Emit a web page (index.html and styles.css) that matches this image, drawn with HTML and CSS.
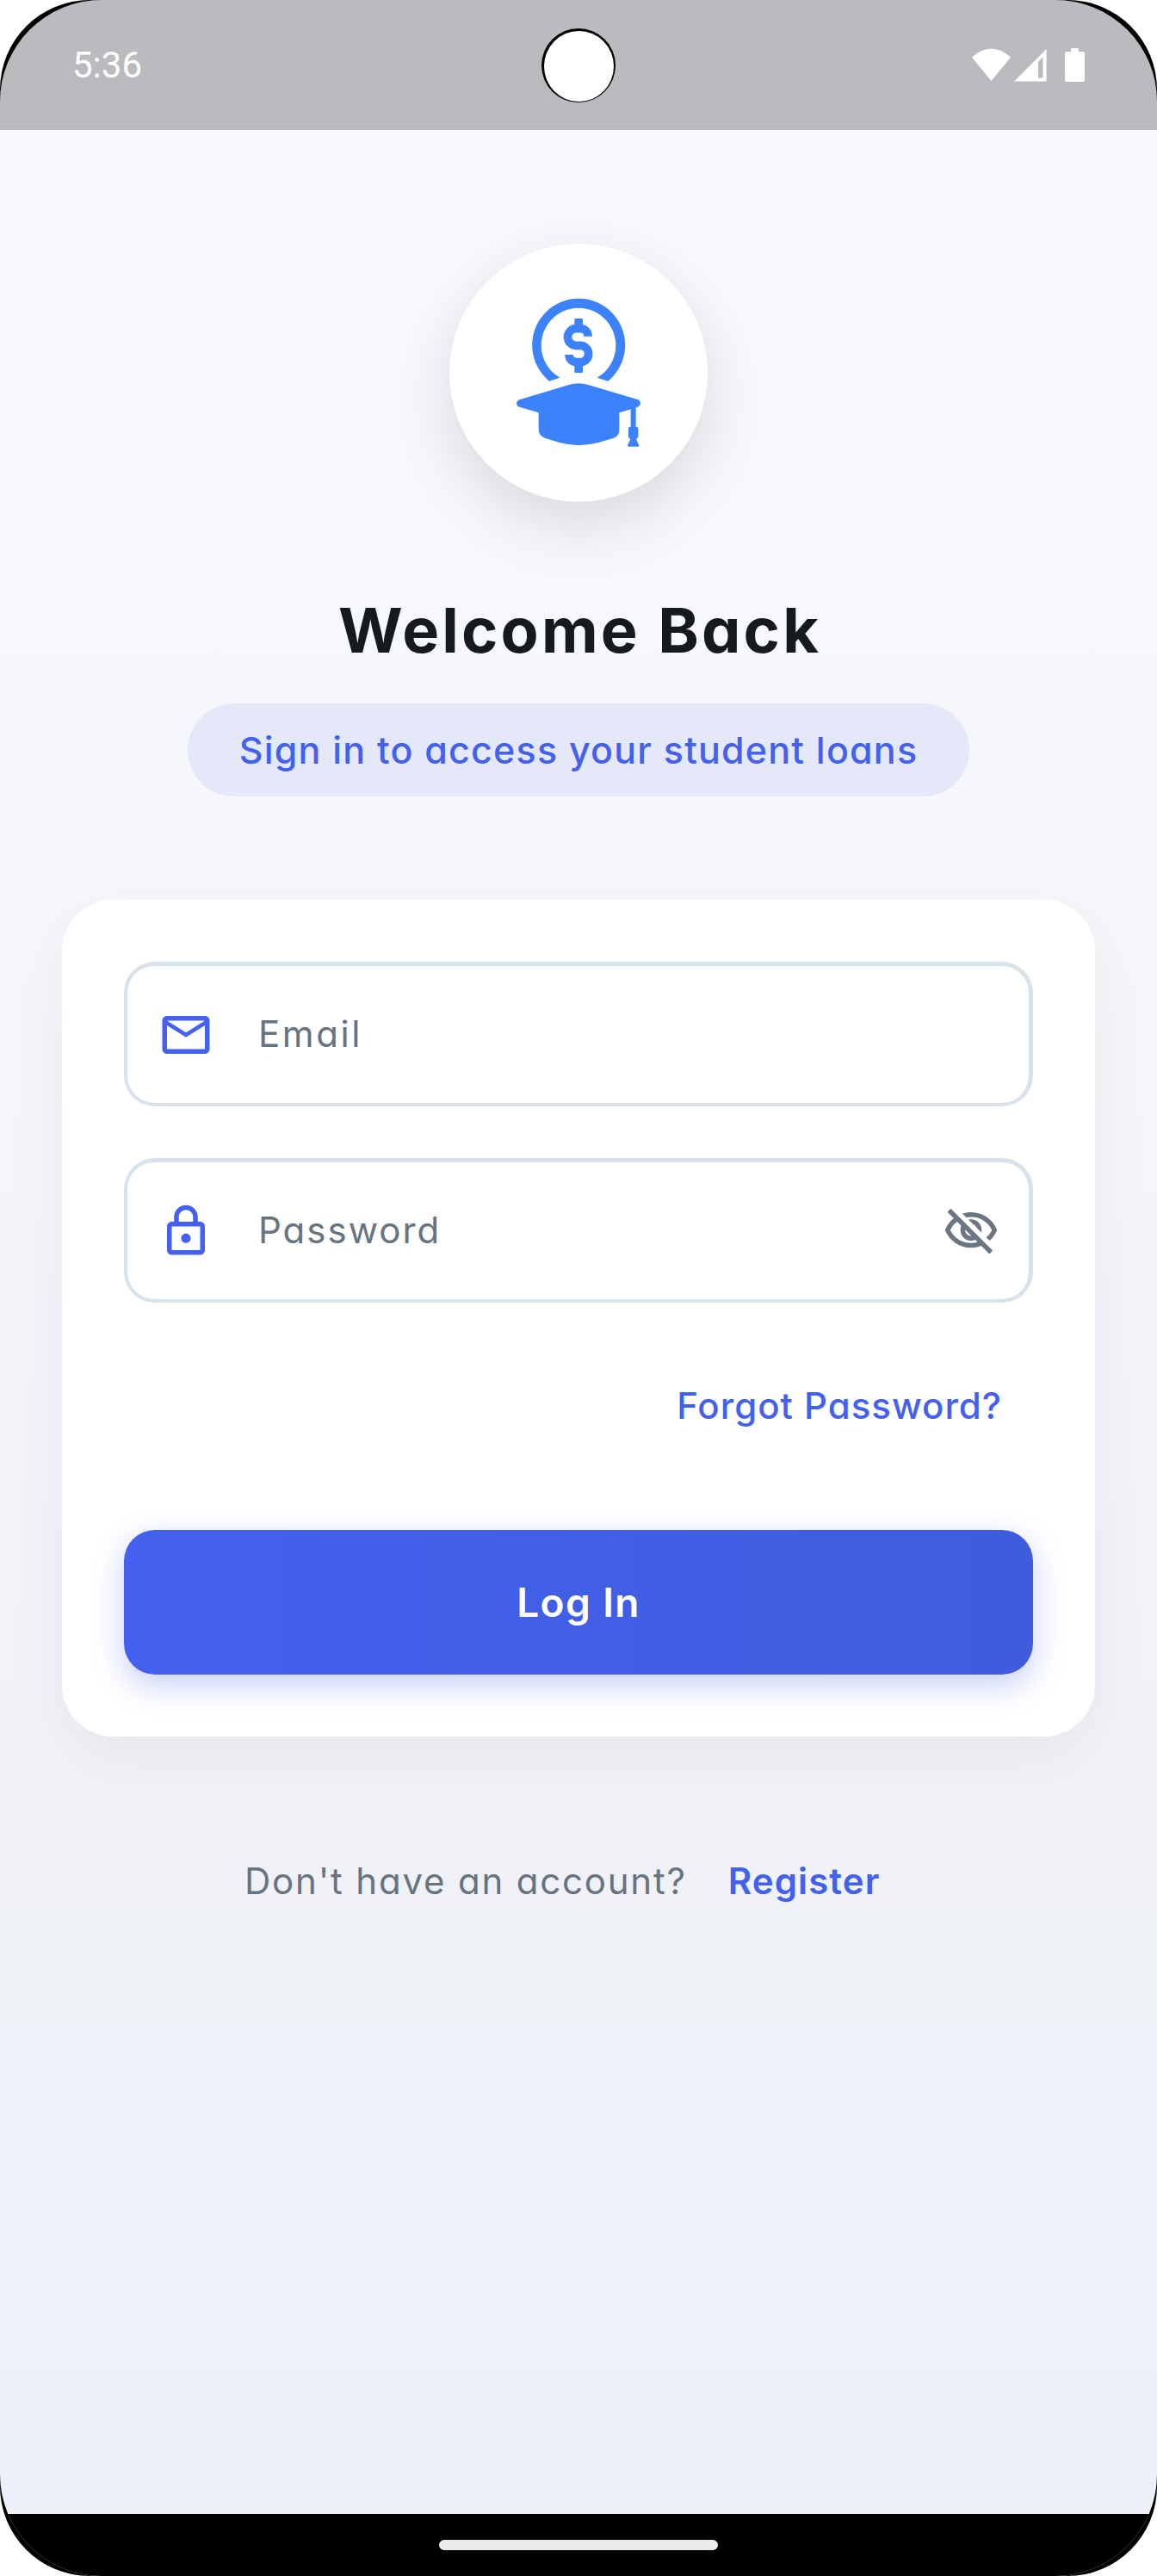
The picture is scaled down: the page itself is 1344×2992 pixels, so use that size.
FILE: index.html
```html
<!DOCTYPE html>
<html lang="en">
<head>
<meta charset="utf-8">
<title>Sign in</title>
<link rel="stylesheet" href="styles.css">
</head>
<body>
<div class="device">
  <div class="screen">
    <header class="status-bar">
      <span class="clock">5:36</span>
      <span class="camera"><span class="lens"></span></span>
      <svg class="status-icons" viewBox="1129 55 131 40" fill="#fff">
        <path d="M1129 65.5Q1151.500 45.500 1174 65.500L1151.500 93Z"/>
        <path fill-rule="evenodd" d="M1178 93.500L1215.600 56V93.500ZM1206 71V89.500H1211.500V65Z"/>
        <path d="M1244 55H1253V59H1258Q1260 59 1260 61V92Q1260 94 1258 94H1239Q1237 94 1237 92V61Q1237 59 1239 59H1244Z"/>
      </svg>
    </header>
    <main class="content">
      <div class="logo">
        <svg viewBox="66 39 900 900" fill="#3b82fc">
          <path d="M414 518A162 162 0 1 1 619 518L581 506A130 130 0 1 0 451 506Z"/>
          <path d="M310 583L482 531Q516 520 550 531L722 582C735 587 735 602 722 608L716 610V678H721Q724 680 724 684V710Q724 716 717 720L727 742Q727 746 723 746H690Q686 746 687 741L697 720Q690 717 690 710V684Q690 679 694 678H698V616L658 628V690Q657 710 637 717L583 733Q516 750 453 733L400 717Q377 708 377 688V628L310 608C297 603 297 588 310 583Z"/>
          <rect x="502" y="300" width="29" height="32" rx="4"/>
          <rect x="502" y="456" width="29" height="33" rx="4"/>
          <path d="M549 362C549 345 537 335 522 335H508A29 29 0 0 0 508 394H522A29 29 0 0 1 522 452H512C495 452 483 442 483 426" fill="none" stroke="#3b82fc" stroke-width="29"/>
        </svg>
      </div>
      <h1 class="title">Welcome Back</h1>
      <p class="subtitle">Sign in to access your student loans</p>
      <form class="card">
        <div class="field">
          <svg class="icon accent" viewBox="0 0 24 24"><path d="M22 6c0-1.100-.9-2-2-2H4c-1.100 0-2 .9-2 2v12c0 1.100.9 2 2 2h16c1.100 0 2-.9 2-2V6zm-2 0l-8 5-8-5h16zm0 12H4V8l8 5 8-5v10z"/></svg>
          <span class="label email">Email</span>
        </div>
        <div class="field">
          <svg class="icon accent" viewBox="0 0 24 24"><path d="M18 8h-1V6c0-2.760-2.240-5-5-5S7 3.240 7 6v2H6c-1.100 0-2 .9-2 2v10c0 1.100.9 2 2 2h12c1.100 0 2-.9 2-2V10c0-1.100-.9-2-2-2zM9 6c0-1.660 1.340-3 3-3s3 1.340 3 3v2H9V6zm9 14H6V10h12v10zm-6-3c1.100 0 2-.9 2-2s-.9-2-2-2-2 .9-2 2 .9 2 2 2z"/></svg>
          <span class="label password">Password</span>
          <svg class="icon muted" viewBox="0 0 24 24"><path d="M12 6c3.790 0 7.170 2.130 8.820 5.500-.59 1.220-1.420 2.270-2.410 3.120l1.410 1.410c1.390-1.230 2.490-2.770 3.180-4.530C21.270 7.110 17 4 12 4c-1.270 0-2.490.2-3.640.57l1.650 1.650C10.660 6.090 11.320 6 12 6zm-1.070 1.140L13 9.210c.57.25 1.030.71 1.280 1.280l2.070 2.070c.08-.34.14-.7.14-1.070C16.500 9.010 14.480 7 12 7c-.37 0-.72.05-1.070.14zM2.010 3.870l2.680 2.680C3.060 7.830 1.770 9.530 1 11.500 2.730 15.890 7 19 12 19c1.520 0 2.980-.29 4.320-.82l3.420 3.420 1.410-1.410L3.420 2.450 2.010 3.870zm7.500 7.500l2.610 2.610c-.04.01-.08.02-.12.02-1.380 0-2.500-1.120-2.500-2.500 0-.05.01-.08.01-.13zm-3.400-3.400l1.750 1.750c-.23.55-.36 1.150-.36 1.780 0 2.480 2.020 4.500 4.500 4.500.63 0 1.230-.13 1.770-.36l.98.98c-.88.24-1.800.38-2.750.38-3.790 0-7.170-2.130-8.820-5.500.7-1.430 1.720-2.610 2.930-3.530z"/></svg>
        </div>
        <a class="forgot">Forgot Password?</a>
        <button class="login" type="button">Log In</button>
      </form>
      <p class="signup"><span class="prompt">Don't have an account?</span><a class="register">Register</a></p>
    </main>
    <footer class="nav-bar"><span class="handle"></span></footer>
  </div>
</div>
</body>
</html>
```
FILE: styles.css
```css
* { box-sizing: border-box; }

body {
  margin: 0;
  background: #fff;
  font-family: Inter, "Open Sans", sans-serif;
  font-feature-settings: "cv11";
}

.device {
  width: 1344px;
  height: 2992px;
  border-radius: 104px;
  background: #000;
  overflow: hidden;
}

.screen {
  display: flex;
  flex-direction: column;
  height: 2992px;
  border-radius: 118px;
  background: linear-gradient(#f9fafe 0%, #f5f7fb 33%, #f0f2f8 73%, #edf0f9 100%);
  overflow: hidden;
}

.status-bar {
  display: grid;
  grid-template-columns: 1fr 86px 1fr;
  align-items: center;
  height: 151px;
  padding: 0 84px;
  background: rgba(0, 0, 0, 0.25);
}

.clock {
  font: 400 42px/60px Roboto, sans-serif;
  color: #fff;
}

.camera {
  width: 86px;
  height: 86px;
  padding: 3px 2px 0 3px;
  border-radius: 50%;
  background: #000;
}

.lens {
  display: block;
  width: 81px;
  height: 82px;
  border-radius: 50%;
  background: #fff;
}

.status-icons {
  justify-self: end;
  width: 131px;
  height: 40px;
}

.content {
  display: flex;
  flex-direction: column;
  align-items: center;
  flex: 1;
  padding: 132px 72px 0;
}

.logo {
  width: 300px;
  height: 300px;
  border-radius: 50%;
  background: #fff;
  box-shadow: 0 24px 72px rgba(0, 0, 0, 0.13);
}

.logo svg { display: block; width: 300px; height: 300px; }

.title {
  margin: 99px 0 0;
  font-size: 72px;
  line-height: 100px;
  font-weight: 700;
  letter-spacing: 3.2px;
  text-indent: 3px;
  color: #16191d;
  white-space: nowrap;
}

.subtitle {
  display: flex;
  align-items: center;
  justify-content: center;
  width: 908px;
  height: 108px;
  margin: 35px 0 0;
  border-radius: 54px;
  background: #e4e8f9;
  font-size: 43px;
  font-weight: 500;
  letter-spacing: 1.2px;
  color: #4361ee;
  white-space: nowrap;
}

.card {
  display: flex;
  flex-direction: column;
  width: 1200px;
  height: 972px;
  margin-top: 120px;
  padding: 72px;
  border-radius: 60px;
  background: #fff;
  box-shadow: 0 24px 72px rgba(0, 0, 0, 0.05);
}

.field {
  display: flex;
  align-items: center;
  height: 168px;
  padding: 0 34px 0 35px;
  border: solid #d9e2ec;
  border-width: 5px 5px 4px 4px;
  border-radius: 36px;
  color: #687380;
}

.field + .field { margin-top: 60px; }

.icon { width: 66px; height: 66px; }
.accent { fill: #4361ee; }
.muted { fill: #6b7682; }

.label {
  flex: 1;
  margin: -2px 0 0 51px;
  font-size: 42px;
  font-weight: 400;
}

.email { letter-spacing: 2.6px; }
.password { letter-spacing: 2px; }

.forgot {
  align-self: flex-end;
  margin: 90px 36px 0 0;
  font-size: 42px;
  line-height: 60px;
  font-weight: 500;
  letter-spacing: 1px;
  color: #4361ee;
}

.login {
  height: 168px;
  margin-top: 114px;
  border: 0;
  border-radius: 36px;
  background: linear-gradient(90deg, #4361ee, #3f5cdd);
  box-shadow: 0 12px 36px rgba(67, 97, 238, 0.3);
  font: inherit;
  font-size: 46px;
  font-weight: 600;
  letter-spacing: 1.4px;
  color: #fff;
}

.signup {
  display: flex;
  align-self: flex-start;
  gap: 48px;
  margin: 138px 0 0 212px;
  font-size: 42px;
  line-height: 60px;
  color: #687380;
  white-space: nowrap;
}

.prompt { letter-spacing: 1.8px; }

.register {
  font-weight: 600;
  letter-spacing: 1.1px;
  color: #4361ee;
}

.nav-bar {
  display: flex;
  justify-content: center;
  height: 72px;
  padding-top: 30px;
  background: #000;
}

.handle {
  width: 324px;
  height: 12px;
  border-radius: 6px;
  background: #eaeaea;
}
```
